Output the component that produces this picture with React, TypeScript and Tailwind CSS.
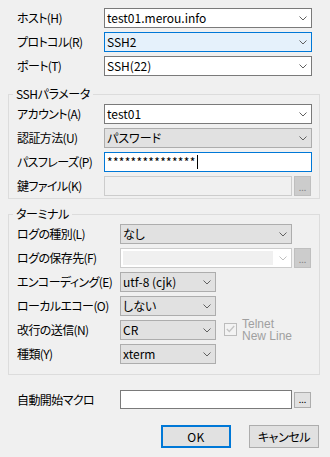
import React from "react";

const Chevron = ({ light = false }: { light?: boolean }) => (
  <svg width="8" height="5" viewBox="0 0 8 5" className="shrink-0">
    <polyline
      points="0.5,0.5 4,4 7.5,0.5"
      fill="none"
      stroke={light ? "#c0c0c0" : "#606060"}
      strokeWidth="1"
    />
  </svg>
);

type Variant = "edit" | "focus" | "button";

const comboCls: Record<Variant, string> = {
  edit: "bg-white border-[#7a7a7a]",
  focus: "bg-[#e5f1fb] border-[#0078d7]",
  button: "bg-[#e1e1e1] border-[#adadad]",
};

function Combo({
  value,
  variant = "edit",
  w,
}: {
  value: string;
  variant?: Variant;
  w: string;
}) {
  return (
    <div
      className={`${w} h-[20px] border ${comboCls[variant]} flex items-center pl-[2px] pr-[4px]`}
    >
      <span className="flex-1 leading-[18px] whitespace-nowrap">{value}</span>
      <Chevron />
    </div>
  );
}

function Dots({ disabled = false, h = "h-[20px]" }: { disabled?: boolean; h?: string }) {
  return (
    <div
      className={
        disabled
          ? `w-[17px] ${h} ml-[2px] border border-[#bfbfbf] bg-[#cccccc] flex items-end justify-center pb-[3px] text-[#838383] text-[9px] leading-[8px]`
          : `w-[17px] ${h} ml-[2px] border border-[#adadad] bg-[#e1e1e1] flex items-end justify-center pb-[3px] text-black text-[9px] leading-[8px]`
      }
    >
      ...
    </div>
  );
}

function Row({
  label,
  lw,
  children,
  h = "h-[20px]",
}: {
  label: string;
  lw: string;
  children: React.ReactNode;
  h?: string;
}) {
  return (
    <div className={`flex items-center ${h}`}>
      <div className={`${lw} whitespace-nowrap leading-[16px] text-[12px] tracking-[-0.6px]`}>{label}</div>
      {children}
    </div>
  );
}

function Group({
  title,
  children,
  cls,
}: {
  title: string;
  children: React.ReactNode;
  cls: string;
}) {
  return (
    <div
      className={`relative ml-[8px] w-[312px] border border-[#dcdcdc] pl-[8px] flex flex-col gap-[4px] ${cls}`}
    >
      <span className="absolute left-[4px] top-[-9px] px-[3px] bg-[#f0f0f0] leading-[16px] whitespace-nowrap text-[12px] tracking-[-0.4px]">
        {title}
      </span>
      {children}
    </div>
  );
}

export default function App() {
  return (
    <div className="w-[330px] h-[457px] bg-[#f0f0f0] pt-[8px] text-[12px] text-black [font-family:'Noto_Sans_CJK_JP',sans-serif] [font-feature-settings:'palt'] overflow-hidden">
      <div className="flex flex-col gap-[4px] pl-[17px]">
        <Row label="ホスト(H)" lw="w-[87px]">
          <Combo value="test01.merou.info" w="w-[208px]" />
        </Row>
        <Row label="プロトコル(R)" lw="w-[87px]">
          <Combo value="SSH2" variant="focus" w="w-[208px]" />
        </Row>
        <Row label="ポート(T)" lw="w-[87px]">
          <Combo value="SSH(22)" w="w-[208px]" />
        </Row>
      </div>

      <Group title="SSHパラメータ" cls="mt-[18px] pt-[9px] pb-[2px]">
        <Row label="アカウント(A)" lw="w-[87px]">
          <Combo value="test01" w="w-[208px]" />
        </Row>
        <Row label="認証方法(U)" lw="w-[87px]">
          <Combo value="パスワード" variant="button" w="w-[208px]" />
        </Row>
        <Row label="パスフレーズ(P)" lw="w-[87px]">
          <div className="w-[208px] h-[20px] border border-[#0078d7] bg-white flex items-center pl-[2px]">
            <span className="leading-[18px] tracking-[0.3px]">***************</span>
            <span className="w-[1px] h-[14px] bg-black ml-[1px]" />
          </div>
        </Row>
        <Row label="鍵ファイル(K)" lw="w-[87px]">
          <div className="w-[188px] h-[20px] border border-[#cccccc] bg-[#f0f0f0]" />
          <Dots disabled />
        </Row>
      </Group>

      <Group title="ターミナル" cls="mt-[15px] pt-[9px] pb-[10px]">
        <Row label="ログの種別(L)" lw="w-[103px]">
          <Combo value="なし" variant="button" w="w-[172px]" />
        </Row>
        <Row label="ログの保存先(F)" lw="w-[103px]">
          <div className="w-[172px] h-[20px] border border-[#cccccc] bg-white flex items-center pl-[2px] pr-[4px]">
            <div className="flex-1 h-[14px] bg-[#f0f0f0] mr-[6px]" />
            <Chevron light />
          </div>
          <Dots disabled />
        </Row>
        <Row label="エンコーディング(E)" lw="w-[103px]">
          <Combo value="utf-8 (cjk)" variant="button" w="w-[96px]" />
        </Row>
        <Row label="ローカルエコー(O)" lw="w-[103px]">
          <Combo value="しない" variant="button" w="w-[96px]" />
        </Row>
        <Row label="改行の送信(N)" lw="w-[103px]">
          <Combo value="CR" variant="button" w="w-[96px]" />
          <div className="ml-[8px] w-[13px] h-[13px] border border-[#bcbcbc] bg-[#f3f3f3] flex items-center justify-center mt-[-2px]">
            <svg width="9" height="8" viewBox="0 0 9 8">
              <polyline
                points="0.8,4 3.3,6.5 8.2,1"
                fill="none"
                stroke="#c4c4c4"
                strokeWidth="1.3"
              />
            </svg>
          </div>
          <div className="ml-[5px] text-[#a0a0a0] leading-[12.5px] [font-family:'Liberation_Sans',sans-serif] text-[12px]">
            Telnet
            <br />
            New Line
          </div>
        </Row>
        <Row label="種類(Y)" lw="w-[103px]">
          <Combo value="xterm" variant="button" w="w-[96px]" />
        </Row>
      </Group>

      <div className="mt-[15px] pl-[17px]">
        <Row label="自動開始マクロ" lw="w-[103px]" h="h-[19px]">
          <div className="w-[172px] h-[19px] border border-[#7a7a7a] bg-white" />
          <Dots h="h-[16px]" />
        </Row>
      </div>

      <div className="mt-[16px] ml-[8px] w-[311px] flex justify-end gap-[18px]">
        <div className="w-[70px] h-[23px] border-2 border-[#0078d7] bg-[#e1e1e1] flex items-center justify-center leading-[16px] tracking-[0.5px]">
          OK
        </div>
        <div className="w-[70px] h-[23px] border border-[#adadad] bg-[#e1e1e1] flex items-center justify-center leading-[16px] tracking-[-0.4px]">
          キャンセル
        </div>
      </div>
    </div>
  );
}
